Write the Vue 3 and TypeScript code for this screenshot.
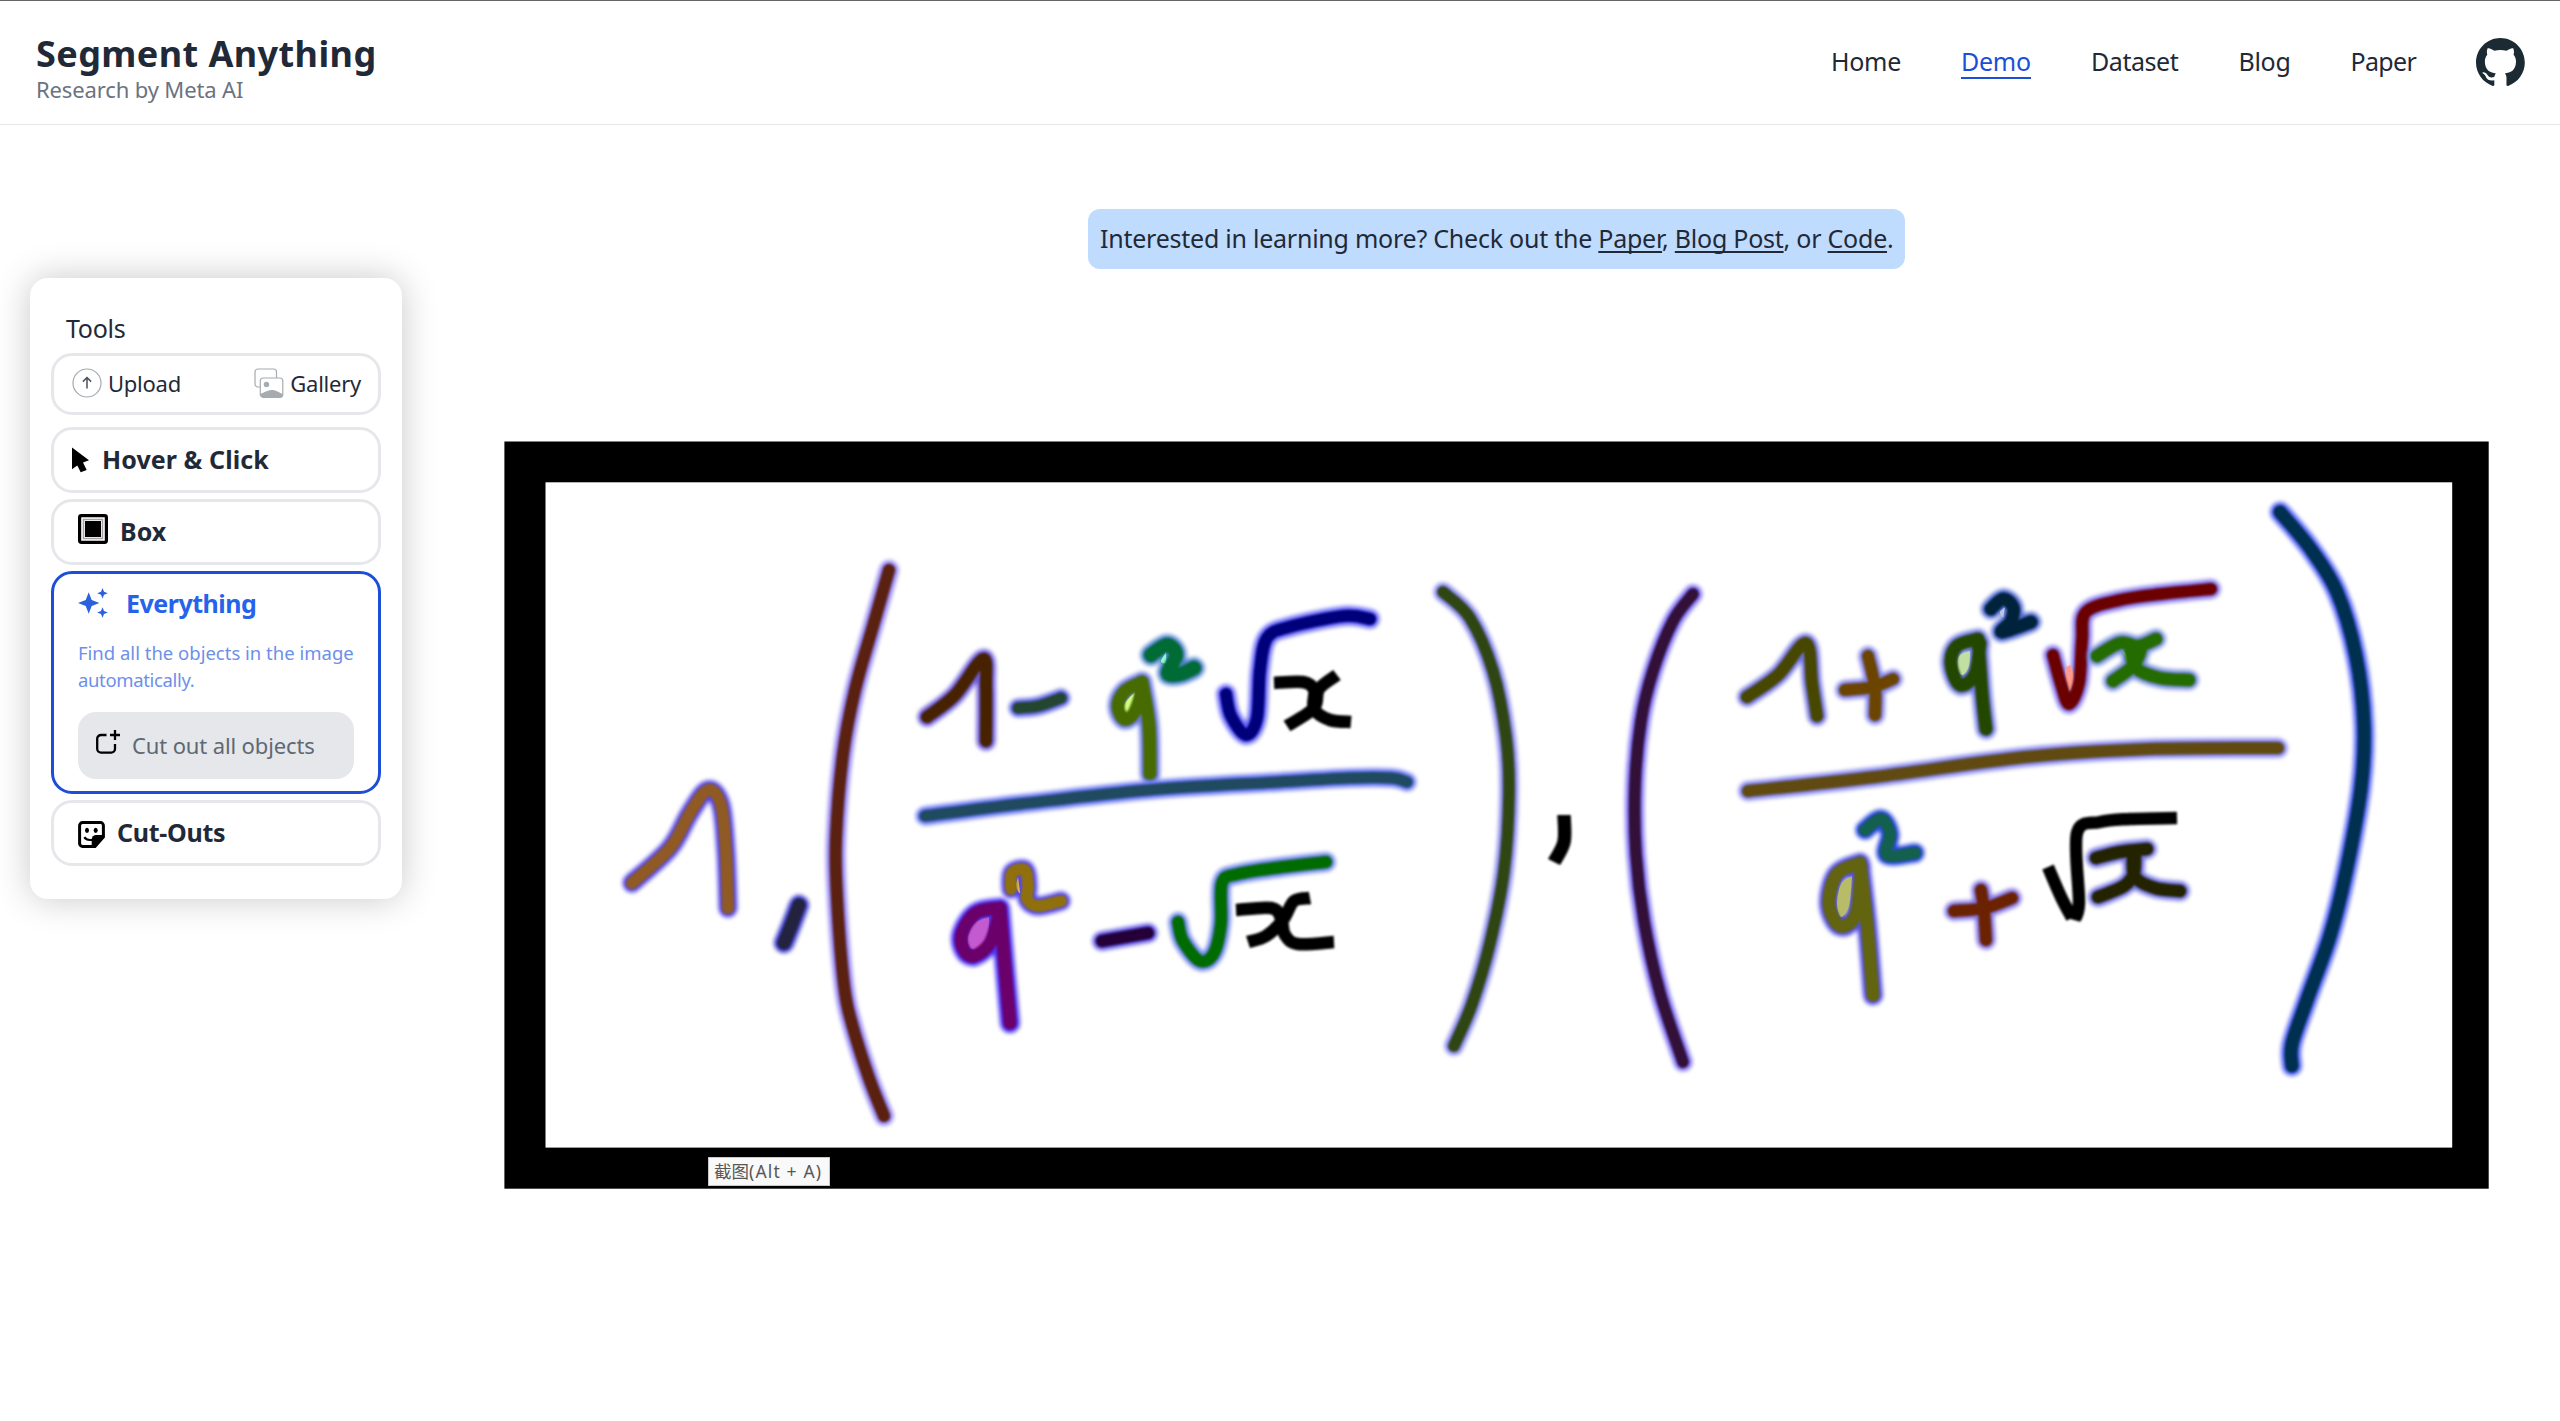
<script setup lang="ts">
type Point = [number, number]

interface Stroke {
  color: string
  edge?: string
  width: number
  lines: Point[][]
  hole?: Point[]
  holeColor?: string
}

const navItems = [
  { label: 'Home', cls: 'home' },
  { label: 'Demo', cls: 'demo' },
  { label: 'Dataset', cls: 'dataset' },
  { label: 'Blog', cls: 'blog' },
  { label: 'Paper', cls: 'paper' },
]

const strokes: Stroke[] = [
  { color: '#8f5a24', edge: '#5646e0', width: 12, lines: [[[632, 883], [670, 848], [690, 813], [708, 790], [721, 805], [726, 852], [728, 908]]] },
  { color: '#23233f', edge: '#3c3cc8', width: 13, lines: [[[799, 905], [791, 926], [784, 943]]] },
  { color: '#5a2010', edge: '#8c7cee', width: 12, lines: [[[889, 570], [873, 626], [855, 690], [843, 754], [836, 838], [837, 897], [844, 985], [852, 1024], [869, 1078], [884, 1116]]] },
  { color: '#472200', edge: '#6a5ad8', width: 12, lines: [[[927, 717], [955, 695], [983, 659], [986, 687], [986, 741]]] },
  { color: '#24452f', edge: '#5a60e0', width: 11, lines: [[[1018, 708], [1038, 706], [1061, 698]]] },
  { color: '#476b00', edge: '#6a78e0', width: 13, lines: [[[1142, 682], [1125, 691], [1118, 706], [1124, 719], [1134, 713], [1142, 692]], [[1142, 682], [1149, 725], [1150, 774]]], hole: [[1135, 692], [1125, 703], [1125, 713], [1132, 709]], holeColor: '#d4ff80' },
  { color: '#006b35', edge: '#4c80c8', width: 14, lines: [[[1151, 655], [1167, 645], [1176, 655], [1168, 673], [1180, 674], [1194, 668]]], hole: [[1166, 652], [1161, 661], [1166, 663]], holeColor: '#8cffc8' },
  { color: '#00007a', edge: '#6060f8', width: 12, lines: [[[1226, 694], [1231, 716], [1246, 735], [1257, 718], [1260, 670], [1267, 638], [1289, 627], [1344, 616], [1370, 619]]] },
  { color: '#000000', width: 12, lines: [[[1274, 683], [1303, 682], [1314, 690], [1314, 709], [1330, 720], [1351, 722]], [[1337, 675], [1319, 689], [1314, 708], [1287, 726]]] },
  { color: '#1f4a60', edge: '#6070ee', width: 11, lines: [[[925, 816], [1020, 804], [1148, 790], [1279, 782], [1348, 778], [1392, 778], [1407, 782]]] },
  { color: '#6b006b', edge: '#4a30f5', width: 13, lines: [[[1000, 908], [976, 913], [962, 933], [964, 950], [974, 956], [990, 943], [1000, 912]], [[1000, 908], [1005, 967], [1010, 1023]]], hole: [[989, 917], [975, 923], [968, 937], [970, 948], [980, 948], [988, 935]], holeColor: '#c45ad0' },
  { color: '#90700c', edge: '#5446ea', width: 12, lines: [[[1011, 889], [1012, 873], [1025, 870], [1028, 887], [1027, 899], [1038, 906], [1061, 901]]], hole: [[1018, 877], [1020, 893], [1016, 886]], holeColor: '#e0b860' },
  { color: '#250038', edge: '#5a50e0', width: 12, lines: [[[1102, 941], [1148, 933]]] },
  { color: '#006b00', edge: '#6880e6', width: 12, lines: [[[1178, 922], [1183, 941], [1200, 961], [1214, 953], [1221, 923], [1222, 883], [1238, 874], [1282, 867], [1326, 862]]] },
  { color: '#000000', width: 12, lines: [[[1236, 910], [1271, 908], [1281, 918], [1285, 935], [1298, 944], [1334, 942]], [[1310, 898], [1294, 901], [1283, 920], [1266, 936], [1248, 942]]] },
  { color: '#2f4512', edge: '#8080e8', width: 11.5, lines: [[[1443, 592], [1470, 618], [1493, 671], [1506, 736], [1509, 793], [1504, 871], [1490, 943], [1472, 1004], [1454, 1046]]] },
  { color: '#000000', width: 13, lines: [[[1564, 815], [1564, 842], [1554, 862]]] },
  { color: '#321038', edge: '#7a6cf0', width: 11.5, lines: [[[1693, 594], [1673, 621], [1653, 671], [1641, 721], [1635, 786], [1636, 854], [1644, 921], [1660, 993], [1683, 1062]]] },
  { color: '#474700', edge: '#7070dc', width: 12, lines: [[[1747, 697], [1778, 675], [1806, 643], [1812, 683], [1817, 716]]] },
  { color: '#6b4400', edge: '#8080e8', width: 12, lines: [[[1868, 656], [1875, 687], [1875, 715]], [[1845, 690], [1873, 687], [1893, 679]]] },
  { color: '#244700', edge: '#7078e0', width: 13, lines: [[[1978, 639], [1957, 646], [1951, 664], [1960, 685], [1975, 674], [1980, 643]], [[1978, 639], [1982, 693], [1986, 729]]], hole: [[1970, 651], [1959, 656], [1958, 670], [1963, 675], [1969, 666]], holeColor: '#bfe0a0' },
  { color: '#00233b', edge: '#5068d0', width: 13, lines: [[[1991, 609], [2003, 599], [2013, 607], [2011, 621], [2002, 632], [2031, 622]]], hole: [[2005, 607], [2003, 617], [2000, 612]], holeColor: '#b8c8e0' },
  { color: '#6b0000', edge: '#8070e8', width: 12, lines: [[[2053, 655], [2061, 684], [2069, 704], [2079, 683], [2082, 640], [2086, 612], [2120, 600], [2161, 594], [2211, 589]]], hole: [[2071, 665], [2065, 670], [2069, 691], [2074, 680]], holeColor: '#ff9a90' },
  { color: '#246b00', edge: '#7088d8', width: 12.5, lines: [[[2097, 656], [2120, 643], [2138, 646], [2156, 639]], [[2142, 646], [2134, 665], [2113, 681]], [[2130, 648], [2136, 668], [2160, 678], [2189, 680]]], hole: [[2123, 651], [2132, 660], [2128, 662]], holeColor: '#a0f080' },
  { color: '#604a12', edge: '#8080ea', width: 12, lines: [[[1748, 791], [1875, 777], [2026, 757], [2149, 749], [2278, 748]]] },
  { color: '#62640f', edge: '#5450e0', width: 13, lines: [[[1860, 863], [1837, 874], [1829, 904], [1840, 926], [1856, 914], [1861, 867]], [[1860, 863], [1867, 923], [1873, 995]]], hole: [[1852, 876], [1841, 884], [1837, 904], [1841, 917], [1849, 906]], holeColor: '#b8bb68' },
  { color: '#14604f', edge: '#2646dc', width: 12, lines: [[[1865, 830], [1881, 819], [1890, 834], [1887, 855], [1915, 853]]] },
  { color: '#6b2200', edge: '#8070e0', width: 12, lines: [[[1981, 890], [1984, 910], [1986, 940]], [[1954, 911], [1985, 908], [2012, 898]]] },
  { color: '#000000', width: 12, lines: [[[2048, 867], [2061, 897], [2072, 918]], [[2074, 920], [2079, 903], [2077, 833], [2100, 822], [2130, 819], [2177, 818]]] },
  { color: '#232300', edge: '#7070e0', width: 12.5, lines: [[[2096, 858], [2120, 852], [2147, 849]], [[2135, 853], [2134, 873], [2124, 886], [2098, 897]], [[2133, 855], [2135, 877], [2155, 888], [2180, 891]]] },
  { color: '#003050', edge: '#5060f2', width: 13, lines: [[[2280, 512], [2310, 548], [2337, 592], [2356, 656], [2364, 725], [2361, 788], [2346, 872], [2330, 936], [2307, 1000], [2292, 1044], [2292, 1066]]] },
]

// Catmull-Rom spline through the sampled pen points
function smooth(points: Point[]): string {
  let d = `M${points[0][0]} ${points[0][1]}`
  for (let i = 0; i < points.length - 1; i++) {
    const p0 = points[i - 1] ?? points[i]
    const p1 = points[i]
    const p2 = points[i + 1]
    const p3 = points[i + 2] ?? p2
    const c1 = [p1[0] + (p2[0] - p0[0]) / 6, p1[1] + (p2[1] - p0[1]) / 6]
    const c2 = [p2[0] - (p3[0] - p1[0]) / 6, p2[1] - (p3[1] - p1[1]) / 6]
    d += `C${c1[0].toFixed(1)} ${c1[1].toFixed(1)} ${c2[0].toFixed(1)} ${c2[1].toFixed(1)} ${p2[0]} ${p2[1]}`
  }
  return d
}

const inks = strokes.map((s) => ({
  ...s,
  d: s.lines.map(smooth).join(''),
  holeD: s.hole ? smooth([...s.hole, s.hole[0]]) + 'Z' : '',
}))
</script>

<template>
  <div class="page">
    <header class="header">
      <div class="brand">
        <div class="brand-title">Segment Anything</div>
        <div class="brand-sub">Research by Meta AI</div>
      </div>
      <nav class="nav">
        <a v-for="item in navItems" :key="item.label" class="nav-link" :class="item.cls">{{ item.label }}</a>
        <svg class="github" viewBox="0 0 98 96" preserveAspectRatio="none">
          <path fill="#1c2b33" d="M48.854 0C21.839 0 0 22 0 49.217c0 21.756 13.993 40.172 33.405 46.69 2.427.49 3.316-1.059 3.316-2.362 0-1.141-.08-5.052-.08-9.127-13.59 2.934-16.42-5.867-16.42-5.867-2.184-5.704-5.42-7.17-5.42-7.17-4.448-3.015.324-3.015.324-3.015 4.934.326 7.523 5.052 7.523 5.052 4.367 7.496 11.404 5.378 14.235 4.074.404-3.178 1.699-5.378 3.074-6.6-10.839-1.141-22.243-5.378-22.243-24.283 0-5.378 1.94-9.778 5.014-13.2-.485-1.222-2.184-6.275.486-13.038 0 0 4.125-1.304 13.426 5.052a46.97 46.97 0 0 1 12.214-1.63c4.125 0 8.33.571 12.213 1.63 9.302-6.356 13.427-5.052 13.427-5.052 2.67 6.763.97 11.816.485 13.038 3.155 3.422 5.015 7.822 5.015 13.2 0 18.905-11.404 23.06-22.324 24.283 1.78 1.548 3.316 4.481 3.316 9.126 0 6.6-.08 11.897-.08 13.526 0 1.304.89 2.853 3.316 2.364 19.412-6.52 33.405-24.935 33.405-46.691C97.707 22 75.788 0 48.854 0z" />
        </svg>
      </nav>
    </header>

    <main class="main">
      <div class="side">
        <section class="panel">
          <div class="tools-title">Tools</div>

          <div class="card source">
            <span class="source-item">
              <svg width="30" height="30" viewBox="0 0 30 30" fill="none">
                <circle cx="15" cy="15" r="14" stroke="#a4aaae" stroke-width="1.2" />
                <path d="M15 20.500V9.800M10.900 13.600 15 9.500l4.100 4.100" stroke="#47525a" stroke-width="1.500" />
              </svg>
              <span class="source-label">Upload</span>
            </span>
            <span class="source-item">
              <svg width="30" height="30" viewBox="0 0 30 30" fill="none">
                <path d="M6 19H4a3 3 0 0 1-3-3V4a3 3 0 0 1 3-3h15.500a3 3 0 0 1 3 3v6" stroke="#a5abaf" stroke-width="1.200" />
                <rect x="6.300" y="10" width="22.500" height="19.300" rx="3" stroke="#a5abaf" stroke-width="1.200" />
                <circle cx="12.500" cy="16.500" r="2.700" fill="#a5abaf" />
                <path d="M6.300 26c4-1.500 7-4 11.400-4s7 2.500 11.100 4v.5a3 3 0 0 1-3 3H9.300a3 3 0 0 1-3-3z" fill="#a5abaf" />
              </svg>
              <span class="source-label">Gallery</span>
            </span>
          </div>

          <div class="card mode hover">
            <svg width="18" height="26" viewBox="0 0 18 26">
              <path d="M0 .5 17 13.300 11 15.500 14.700 23 8.700 25.300 5.300 18.500 0 22.200z" />
            </svg>
            <span class="mode-label">Hover &amp; Click</span>
          </div>

          <div class="card mode box">
            <svg width="30" height="30" viewBox="0 0 30 30" fill="none">
              <rect x="1.600" y="1.600" width="26.800" height="26.800" rx="1.800" stroke="#000" stroke-width="3.200" />
              <rect x="5.500" y="5.500" width="19" height="19" stroke="#aaa0a0" stroke-width="1.500" />
              <rect x="7" y="7" width="16" height="16" fill="#000" />
            </svg>
            <span class="mode-label">Box</span>
          </div>

          <div class="card active">
            <div class="active-head">
              <svg width="30" height="30" viewBox="0 0 30 30" fill="#2b62dc">
                <path d="M10.700 4.300 13.700 12 21.400 15 13.700 18 10.700 25.700 7.700 18 0 15 7.700 12z" />
                <path d="M24.500 0 26 3.800 29.800 5.300 26 6.800 24.500 10.600 23 6.800 19.200 5.300 23 3.800z" />
                <path d="M24.500 19.200 26 23 29.800 24.500 26 26 24.500 29.800 23 26 19.200 24.500 23 23z" />
              </svg>
              <span class="mode-label">Everything</span>
            </div>
            <p class="desc">Find all the objects in the image<br /><span class="desc-tail">automatically.</span></p>
            <div class="cut-button">
              <svg width="25" height="25" viewBox="0 0 25 25" fill="none" stroke="#000" stroke-width="2.300">
                <path d="M10.500 5H5a3.800 3.800 0 0 0-3.800 3.800v10A3.800 3.800 0 0 0 5 22.600h10.200a3.800 3.800 0 0 0 3.800-3.800V14" />
                <path d="M19 0v10M14 5h10" />
              </svg>
              <span class="cut-label">Cut out all objects</span>
            </div>
          </div>

          <div class="card mode cutouts">
            <svg width="27" height="27" viewBox="0 0 27 27" fill="none">
              <path d="M4.500 1.600h18a2.900 2.900 0 0 1 2.900 2.900v11.500L17 25.400H4.500a2.900 2.900 0 0 1-2.900-2.900v-18a2.900 2.900 0 0 1 2.900-2.900z" stroke="#000" stroke-width="3" />
              <path d="M13.700 26v-7.500a4.500 4.500 0 0 1 4.500-4.500h8v2L17.500 26z" fill="#000" />
              <ellipse cx="9" cy="9.300" rx="2" ry="2.600" fill="#000" />
              <ellipse cx="17.700" cy="9.300" rx="2" ry="2.600" fill="#000" />
              <path d="M6.300 16.200c1.500 2.300 4.200 3.200 7.700 2.600" stroke="#000" stroke-width="2.200" />
            </svg>
            <span class="mode-label">Cut-Outs</span>
          </div>
        </section>
      </div>

      <div class="stage">
        <div class="banner">
          Interested in learning more? Check out the <u>Paper</u>, <u>Blog Post</u>, or <u>Code</u>.
        </div>

        <div class="canvas">
          <svg class="ink" viewBox="504 441 1985 748" fill="none" stroke-linejoin="round">
            <rect x="504.400" y="441.500" width="1984.300" height="747.200" fill="#000" />
            <rect x="545.500" y="482.300" width="1906.700" height="665.300" fill="#fff" />
            <g v-for="(ink, i) in inks" :key="i">
              <g v-if="ink.edge" stroke-linecap="round">
                <path :d="ink.d" :stroke="ink.edge" :stroke-width="ink.width + 7" class="soft" />
                <path v-if="ink.hole" :d="ink.holeD" :fill="ink.holeColor" />
                <path :d="ink.d" :stroke="ink.color" :stroke-width="ink.width" class="core" />
              </g>
              <path v-else :d="ink.d" :stroke="ink.color" :stroke-width="ink.width + 0.5" class="core" />
            </g>
          </svg>
          <div class="tooltip">截图<span class="keys">(Alt + A)</span></div>
        </div>
      </div>
    </main>
  </div>
</template>

<style>
body {
  background: #fff;
}
</style>

<style scoped>
.page {
  box-sizing: border-box;
  width: 2560px;
  height: 1421px;
  overflow: hidden;
  border-top: 1px solid #666;
  background: #fff;
  color: #1f2937;
  font-family: "Noto Sans", "Open Sans", "Noto Sans CJK SC", sans-serif;
}
.header {
  box-sizing: border-box;
  display: flex;
  justify-content: space-between;
  height: 124px;
  padding: 32px 35px 0 36px;
  border-bottom: 1px solid #e5e7eb;
  white-space: nowrap;
}
.brand-title {
  font-size: 36px;
  line-height: 41px;
  font-weight: 700;
  letter-spacing: 0.42px;
}
.brand-sub {
  font-size: 22px;
  line-height: 30px;
  letter-spacing: -0.13px;
  color: #6b7280;
}
.nav {
  display: flex;
  align-items: flex-start;
  gap: 60px;
}
.nav-link {
  margin-top: 12px;
  font-size: 25px;
  line-height: 32px;
}
.home {
  width: 70px;
  letter-spacing: -0.3px;
}
.demo {
  width: 70px;
  letter-spacing: -0.25px;
  color: #1d4ed8;
  border-bottom: 2px solid #1d4ed8;
}
.dataset {
  width: 87.5px;
  letter-spacing: -0.45px;
}
.blog {
  width: 52px;
  letter-spacing: -0.3px;
}
.paper {
  width: 65.500px;
  letter-spacing: -0.65px;
}
.github {
  width: 49px;
  height: 48px;
  margin-top: 5px;
}
.main {
  display: flex;
}
.side {
  flex: none;
  width: 433px;
}
.panel {
  box-sizing: border-box;
  width: 372px;
  height: 621px;
  margin: 153px 0 0 30px;
  padding: 32px 21px 0;
  border-radius: 18px;
  background: #fff;
  box-shadow: 0 0 36px rgba(0, 0, 0, 0.22);
  white-space: nowrap;
}
.tools-title {
  padding-left: 15px;
  margin-bottom: 7px;
  font-size: 25px;
  line-height: 36px;
  letter-spacing: -0.3px;
}
.card {
  box-sizing: border-box;
  border: 3px solid #e5e7eb;
  border-radius: 21px;
}
.source {
  display: flex;
  justify-content: space-between;
  height: 62px;
  margin-bottom: 12px;
  padding: 12px 17px 0 18px;
}
.source-item {
  display: flex;
}
.source-label {
  font-size: 22px;
  line-height: 30px;
  margin-left: 6px;
  letter-spacing: -0.25px;
}
.mode {
  display: flex;
  height: 66px;
  margin-bottom: 6px;
}
.mode-label {
  font-size: 25px;
  line-height: 36px;
  font-weight: 700;
}
.hover {
  padding: 11px 0 0 18px;
}
.hover svg {
  margin: 6px 12px 0 0;
}
.hover .mode-label {
  letter-spacing: 0.08px;
}
.box {
  padding: 11px 0 0 24px;
}
.box svg {
  margin: 1px 12px 0 0;
}
.active {
  height: 223px;
  margin-bottom: 6px;
  padding: 11px 24px 0;
  border-color: #1d4ed8;
}
.active-head {
  display: flex;
  height: 36px;
  color: #2563eb;
}
.active-head svg {
  margin: 3px 18px 0 0;
}
.active-head .mode-label {
  letter-spacing: -0.5px;
}
.desc {
  margin: 18px 0 0;
  font-size: 18.500px;
  line-height: 27px;
  color: #6e8fe9;
}
.desc-tail {
  letter-spacing: -0.35px;
}
.cut-button {
  box-sizing: border-box;
  display: flex;
  height: 67px;
  margin-top: 19px;
  padding: 18px 0 0 18px;
  border-radius: 18px;
  background: #e5e7eb;
}
.cut-label {
  margin-left: 11px;
  font-size: 22px;
  line-height: 30px;
  letter-spacing: -0.13px;
  color: #5f6873;
}
.cutouts {
  padding: 11px 0 0 24px;
}
.cutouts svg {
  margin: 7px 12px 0 0;
}
.cutouts .mode-label {
  letter-spacing: -0.28px;
}
.stage {
  flex: 1;
  display: flex;
  flex-direction: column;
  align-items: center;
}
.banner {
  box-sizing: border-box;
  width: 817px;
  height: 60px;
  margin: 84px 0 172px;
  padding-left: 12px;
  border-radius: 12px;
  background: #bfdbfe;
  font-size: 25px;
  line-height: 58px;
  letter-spacing: -0.24px;
  white-space: nowrap;
}
.banner u {
  text-decoration-thickness: 2px;
  text-underline-offset: 3px;
  text-decoration-skip-ink: none;
}
.canvas {
  position: relative;
  width: 1985px;
  height: 748px;
}
.ink {
  display: block;
  width: 1985px;
  height: 748px;
}
.soft {
  filter: blur(2px);
}
.core {
  filter: blur(1px);
}
.tooltip {
  position: absolute;
  left: 204px;
  top: 716px;
  box-sizing: border-box;
  width: 122px;
  height: 29px;
  padding-left: 5px;
  border: 1px solid #c8c8c8;
  background: #f9f9f9;
  color: #575757;
  font-size: 17.500px;
  line-height: 27px;
  white-space: nowrap;
}
.keys {
  letter-spacing: 1.15px;
}
</style>
